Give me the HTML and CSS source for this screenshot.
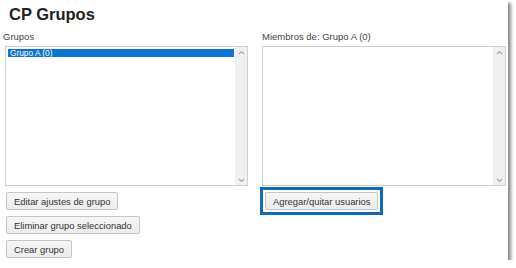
FILE: index.html
```html
<!DOCTYPE html>
<html lang="es">
<head>
    <meta charset="UTF-8">
    <title>CP Grupos</title>
    <link rel="stylesheet" href="styles.css">
</head>
<body>
    <div class="panel">
        <h1>CP Grupos</h1>

        <div class="columns">
            <div class="column">
                <label class="field-label">Grupos</label>
                <div class="listbox">
                    <ul class="list-items">
                        <li class="selected">Grupo A (0)</li>
                    </ul>
                    <div class="scrollbar">
                        <svg width="7" height="5" viewBox="0 0 7 5"><path d="M1 4 L3.5 1.5 L6 4" fill="none" stroke="#a8a8a8" stroke-width="1.2"/></svg>
                        <svg width="7" height="5" viewBox="0 0 7 5"><path d="M1 1 L3.5 3.5 L6 1" fill="none" stroke="#a8a8a8" stroke-width="1.2"/></svg>
                    </div>
                </div>
                <div class="actions">
                    <button class="btn">Editar ajustes de grupo</button>
                    <button class="btn">Eliminar grupo seleccionado</button>
                    <button class="btn">Crear grupo</button>
                </div>
            </div>

            <div class="column">
                <label class="field-label">Miembros de: Grupo A (0)</label>
                <div class="listbox">
                    <ul class="list-items"></ul>
                    <div class="scrollbar">
                        <svg width="7" height="5" viewBox="0 0 7 5"><path d="M1 4 L3.5 1.5 L6 4" fill="none" stroke="#a8a8a8" stroke-width="1.2"/></svg>
                        <svg width="7" height="5" viewBox="0 0 7 5"><path d="M1 1 L3.5 3.5 L6 1" fill="none" stroke="#a8a8a8" stroke-width="1.2"/></svg>
                    </div>
                </div>
                <div class="highlight">
                    <button class="btn">Agregar/quitar usuarios</button>
                </div>
            </div>
        </div>
    </div>
</body>
</html>
```

FILE: styles.css
```css
* {
    box-sizing: border-box;
    margin: 0;
    padding: 0;
}
body {
    background: #fff;
    font-family: 'Liberation Sans', Arial, sans-serif;
    color: #333;
}
.panel {
    width: 508px;
    height: 260px;
    background: #fff;
    padding: 5px 2px 0 5px;
    box-shadow: 3px 3px 3px rgba(0,0,0,0.45);
}
h1 {
    font-size: 16.5px;
    line-height: 18px;
    font-weight: 700;
    color: #222;
    margin: 0 0 8px 4px;
}
.columns {
    display: grid;
    grid-template-columns: 243px 244px;
    column-gap: 14px;
}
.column {
    display: flex;
    flex-direction: column;
}
.field-label {
    display: block;
    font-size: 9.5px;
    line-height: 12px;
    margin: 0 0 3px -2px;
    color: #444;
}
.column:last-child .field-label {
    margin-left: 0;
}
.listbox {
    height: 140px;
    border: 1px solid #cfcfcf;
    display: flex;
    background: #fff;
}
.list-items {
    flex: 1;
    list-style: none;
    padding: 2px 1px 0 2px;
}
.list-items li {
    font-size: 8.3px;
    line-height: 8px;
    height: 8px;
    padding-left: 2px;
    color: #fff;
}
.list-items li.selected {
    background: #0a74d6;
}
.scrollbar {
    width: 12px;
    background: #f0f0f0;
    display: flex;
    flex-direction: column;
    justify-content: space-between;
    align-items: center;
    padding: 3px 0 2px;
}
.actions {
    display: flex;
    flex-direction: column;
    align-items: flex-start;
    gap: 6px;
    margin-top: 6px;
    padding-left: 1px;
}
.btn {
    height: 18px;
    padding: 0 7px;
    font-family: 'Liberation Sans', Arial, sans-serif;
    font-size: 9.4px;
    color: #333;
    background: linear-gradient(#f6f6f6, #ececec);
    border: 1px solid #c6c6c6;
    border-radius: 2px;
}
.highlight {
    align-self: flex-start;
    display: inline-block;
    margin: 1px 0 0 -2px;
    padding: 2px;
    border: 3px solid #0b6cbd;
    line-height: 0;
}
.highlight .btn {
    padding: 0 7px;
}
```
